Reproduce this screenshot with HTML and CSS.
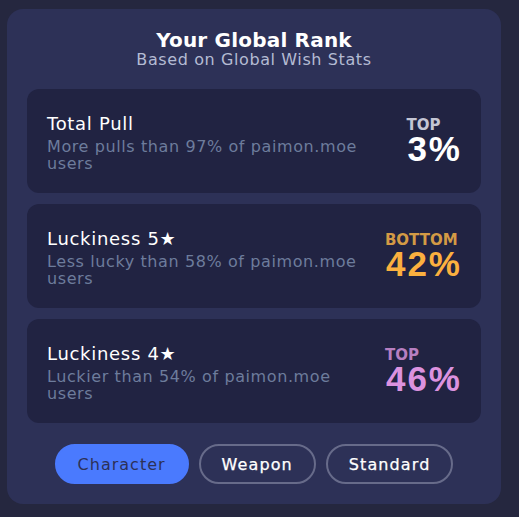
FILE: index.html
```html
<!DOCTYPE html>
<html>
<head>
<meta charset="utf-8">
<link rel="stylesheet" href="styles.css">
</head>
<body>
<div class="card">
  <div class="header">
    <div class="title">Your Global Rank</div>
    <div class="subtitle">Based on Global Wish Stats</div>
  </div>
  <div class="list">
    <div class="item">
      <div class="info">
        <div class="name">Total Pull</div>
        <div class="desc">More pulls than 97% of paimon.moe users</div>
      </div>
      <div class="rank white">
        <div class="label">TOP</div>
        <div class="pct">3%</div>
      </div>
    </div>
    <div class="item">
      <div class="info">
        <div class="name">Luckiness 5★</div>
        <div class="desc">Less lucky than 58% of paimon.moe users</div>
      </div>
      <div class="rank orange">
        <div class="label">BOTTOM</div>
        <div class="pct">42%</div>
      </div>
    </div>
    <div class="item">
      <div class="info">
        <div class="name">Luckiness 4★</div>
        <div class="desc">Luckier than 54% of paimon.moe users</div>
      </div>
      <div class="rank purple">
        <div class="label">TOP</div>
        <div class="pct">46%</div>
      </div>
    </div>
  </div>
  <div class="tabs">
    <button class="tab active">Character</button>
    <button class="tab">Weapon</button>
    <button class="tab">Standard</button>
  </div>
</div>
</body>
</html>
```
FILE: styles.css
```css
html, body {
  margin: 0;
  padding: 0;
  background: #25273f;
  width: 519px;
  height: 517px;
  overflow: hidden;
}
body {
  padding: 9px 18px 0 7px;
  box-sizing: border-box;
  font-family: "DejaVu Sans", "Noto Sans", sans-serif;
}
.card {
  width: 494px;
  height: 495px;
  box-sizing: border-box;
  background: #2d3157;
  border-radius: 16px;
  padding: 20px 20px 20px 20px;
  display: flex;
  flex-direction: column;
}
.header {
  text-align: center;
  height: 60px;
}
.title {
  color: #ffffff;
  font-weight: 700;
  font-size: 20px;
  line-height: 22px;
  letter-spacing: 0.2px;
}
.subtitle {
  color: #b4bbd3;
  font-size: 16px;
  line-height: 17px;
  letter-spacing: 0.6px;
}
.list {
  display: flex;
  flex-direction: column;
  gap: 11px;
}
.item {
  height: 104px;
  box-sizing: border-box;
  background: #212342;
  border-radius: 12px;
  padding: 0 20px;
  display: flex;
  align-items: center;
  justify-content: space-between;
}
.info {
  width: 325px;
  flex-shrink: 0;
  margin-top: 3px;
}
.name {
  color: #ffffff;
  font-size: 18px;
  line-height: 22px;
  letter-spacing: 0.7px;
  margin-bottom: 3px;
}
.desc {
  color: #6d7c9c;
  font-size: 16px;
  line-height: 17px;
  letter-spacing: 0.6px;
}
.rank {
  font-weight: 700;
  margin-right: -1px;
}
.label {
  font-size: 15px;
  line-height: 16px;
  margin-left: -1px;
}
.pct {
  font-family: "Liberation Sans", Arial, sans-serif;
  font-size: 35px;
  line-height: 32px;
  letter-spacing: 2px;
}
.white .label { color: #c3c5d3; }
.white .pct { color: #ffffff; }
.orange .label { color: #d39a45; }
.orange .pct { color: #fbb03f; }
.purple .label { color: #b77fc1; }
.purple .pct { color: #dc92df; }
.tabs {
  margin-top: 21px;
  display: flex;
  justify-content: center;
  gap: 10px;
}
.tab {
  height: 40px;
  border-radius: 20px;
  border: 2px solid #676b8a;
  background: transparent;
  color: #ffffff;
  font-family: "DejaVu Sans", "Noto Sans", sans-serif;
  font-size: 16px;
  font-weight: 400;
  letter-spacing: 1.1px;
  -webkit-text-stroke: 0.25px #ffffff;
  padding: 0 21px;
}
.tab.active {
  background: #4a7afe;
  border-color: #4a7afe;
  color: #2d3157;
  -webkit-text-stroke: 0;
  letter-spacing: 1px;
}
```
